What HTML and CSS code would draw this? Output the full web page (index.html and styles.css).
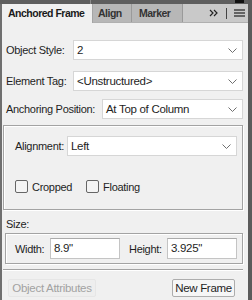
FILE: index.html
```html
<!DOCTYPE html>
<html lang="en">
<head>
<meta charset="UTF-8">
<title>Anchored Frame</title>
<link rel="stylesheet" href="styles.css">
</head>
<body>
<div class="window">
  <div class="topbar"><span class="topbar-notch"></span><span class="topbar-mark"></span></div>
  <div class="tabs">
    <div class="tab active">Anchored Frame</div>
    <div class="tab tab-align">Align</div>
    <div class="tab tab-marker">Marker</div>
    <div class="tab-tools">
      <svg class="more" width="10" height="8" viewBox="0 0 10 8"><polyline points="1,1 4,4 1,7" /><polyline points="5,1 8,4 5,7" /></svg>
      <span class="tool-sep"></span>
      <svg class="menu" width="11" height="8" viewBox="0 0 11 8"><line x1="0" y1="1" x2="11" y2="1" /><line x1="0" y1="4" x2="11" y2="4" /><line x1="0" y1="7" x2="11" y2="7" /></svg>
    </div>
  </div>

  <div class="panel">
    <div class="row row-style">
      <span class="label">Object Style:</span>
      <div class="select">2<svg class="chev" width="9" height="5" viewBox="0 0 9 5"><polyline points="0.5,0.5 4.5,4.5 8.5,0.5" /></svg></div>
    </div>
    <div class="row row-tag">
      <span class="label">Element Tag:</span>
      <div class="select">&lt;Unstructured&gt;<svg class="chev" width="9" height="5" viewBox="0 0 9 5"><polyline points="0.5,0.5 4.5,4.5 8.5,0.5" /></svg></div>
    </div>
    <div class="row row-anchor">
      <span class="label wide">Anchoring Position:</span>
      <div class="select">At Top of Column<svg class="chev" width="9" height="5" viewBox="0 0 9 5"><polyline points="0.5,0.5 4.5,4.5 8.5,0.5" /></svg></div>
    </div>

    <div class="group">
      <div class="row">
        <span class="label narrow">Alignment:</span>
        <div class="select">Left<svg class="chev" width="9" height="5" viewBox="0 0 9 5"><polyline points="0.5,0.5 4.5,4.5 8.5,0.5" /></svg></div>
      </div>
      <div class="checks">
        <label class="check"><span class="box"></span>Cropped</label>
        <label class="check"><span class="box"></span>Floating</label>
      </div>
    </div>

    <div class="size-label">Size:</div>
    <div class="size-box">
      <span class="size-name">Width:</span>
      <div class="input">8.9"</div>
      <span class="size-name height-name">Height:</span>
      <div class="input">3.925"</div>
    </div>

    <div class="separator"></div>

    <div class="buttons">
      <button class="btn disabled">Object Attributes</button>
      <button class="btn">New Frame</button>
    </div>
  </div>
</div>
</body>
</html>
```

FILE: styles.css
```css
body {
  margin: 0;
  background: #5b5b5b;
  font-family: "Liberation Sans", Arial, sans-serif;
  font-size: 11px;
  letter-spacing: -0.3px;
  color: #1e1e1e;
}
.window {
  width: 246px;
  height: 300px;
  border-left: 2px solid #6f6f6f;
  display: flex;
  flex-direction: column;
  background: #f0f0f0;
}
.topbar {
  height: 4px;
  background: #5e5e5e;
  display: flex;
  margin-left: -2px;
}
.topbar-notch {
  width: 90px;
  border-right: 1px solid #8a8a8a;
}
.topbar-mark {
  width: 9px;
  height: 3px;
  margin-left: 144px;
  background: #111;
}
.tabs {
  height: 18px;
  display: flex;
  background: #c9c9c9;
  border-bottom: 1px solid #b0b0b0;
}
.tab {
  box-sizing: border-box;
  padding: 0 6px;
  line-height: 18px;
  font-size: 10.5px;
  font-weight: bold;
  letter-spacing: -0.5px;
  color: #333;
  background: #b7b7b7;
  border-right: 1px solid #9a9a9a;
}
.tab.active {
  width: 91px;
  background: #f0f0f0;
  color: #1a1a1a;
  height: 19px;
  border-right: 1px solid #a5a5a5;
}
.tab-align { width: 39px; padding-left: 5px; }
.tab-marker { width: 51px; padding-left: 7px; }
.tab-tools {
  flex: 1;
  display: flex;
  align-items: center;
  justify-content: flex-end;
  padding-right: 3px;
}
.more polyline {
  fill: none;
  stroke: #222;
  stroke-width: 1.2;
}
.tool-sep {
  width: 1px;
  height: 11px;
  background: #444;
  margin: 0 7px 0 7px;
}
.menu line {
  stroke: #222;
  stroke-width: 1.2;
}
.panel {
  flex: 1;
  padding: 17px 5px 0 4px;
  display: flex;
  flex-direction: column;
}
.row {
  display: flex;
  align-items: center;
}
.row-tag { margin-top: 11px; }
.row-anchor { margin-top: 8px; }
.label {
  width: 67px;
  flex: none;
}
.label.wide { width: 96px; }
.label.narrow { width: 52px; }
.select {
  flex: 1;
  height: 20px;
  box-sizing: border-box;
  background: #fff;
  border: 1px solid #d6d6d6;
  display: flex;
  align-items: center;
  justify-content: space-between;
  padding: 0 5px 0 3px;
  font-size: 11.5px;
}
.chev polyline {
  fill: none;
  stroke: #6f6f6f;
  stroke-width: 1;
}
.group {
  margin: 6px 0 0 -3px;
  height: 85px;
  box-sizing: border-box;
  border: 1px solid #a3a3a3;
  box-shadow: inset 1px 1px 0 #fff, 1px 1px 0 #fff;
  padding: 10px 5px 0 11px;
}
.checks {
  display: flex;
  margin-top: 24px;
}
.check {
  display: flex;
  align-items: center;
  margin-right: 14px;
}
.check .box {
  width: 11px;
  height: 11px;
  border: 1px solid #666;
  border-radius: 2px;
  background: #f4f4f4;
  margin-right: 4px;
}
.size-label {
  margin-top: 7px;
  line-height: 14px;
}
.size-box {
  margin: 2px 0 0 -1px;
  height: 31px;
  box-sizing: border-box;
  border: 1px solid #a3a3a3;
  box-shadow: inset 1px 1px 0 #fff, 1px 1px 0 #fff;
  display: flex;
  align-items: center;
  padding: 0 5px 0 9px;
}
.size-name {
  width: 35px;
}
.height-name {
  margin-left: 9px;
  width: 38px;
}
.input {
  width: 70px;
  height: 21px;
  box-sizing: border-box;
  background: #fff;
  border: 1px solid #c4c4c4;
  border-top-color: #ababab;
  padding: 0 3px;
  line-height: 19px;
  font-size: 11.5px;
}
.separator {
  margin: 5px 0 0 -3px;
  height: 1px;
  background: #a3a3a3;
  border-bottom: 1px solid #fff;
}
.buttons {
  display: flex;
  justify-content: space-between;
  margin-top: 8px;
  padding: 0 8px 0 2px;
}
.btn {
  font-family: "Liberation Sans", Arial, sans-serif;
  font-size: 11.5px;
  letter-spacing: -0.3px;
  height: 18px;
  width: 63px;
  padding: 0;
  border: 1px solid #adadad;
  border-radius: 2px;
  background: #f6f6f6;
  color: #1e1e1e;
}
.btn.disabled {
  width: 88px;
  color: #a2a2a2;
  border-color: #e6e6e6;
  background: #eeeeee;
}
```
